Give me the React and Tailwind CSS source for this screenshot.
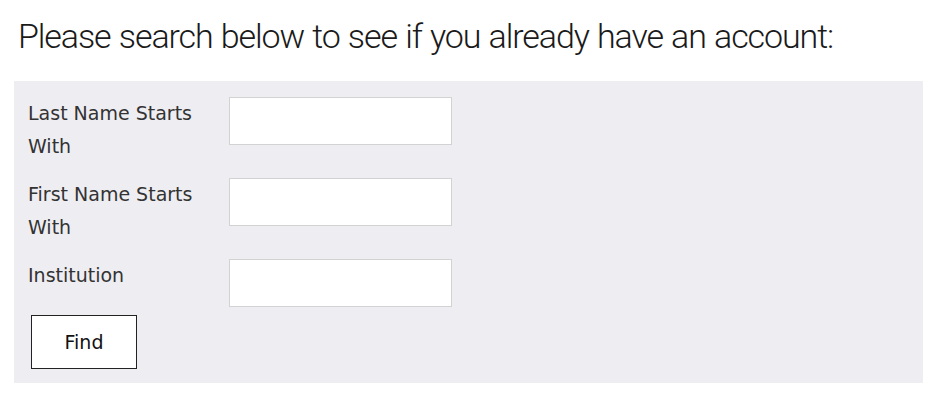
export default function App() {
  const fields = [
    { label: "Last Name Starts With", gap: "mb-[15px]" },
    { label: "First Name Starts With", gap: "mb-[15px]" },
    { label: "Institution", gap: "mb-[8px]" },
  ];

  return (
    <div className="min-h-[406px] w-[945px] bg-white">
      {/* Heading */}
      <h1 className="pl-[18px] pt-[14px] text-[34px] leading-[44px] font-light tracking-[-1.1px] [word-spacing:1px] text-[#1a1a1a] [font-family:'Roboto',sans-serif]">
        Please search below to see if you already have an account:
      </h1>

      {/* Search panel */}
      <div className="mx-[14px] mt-[23px] w-[909px] bg-[#eeedf2] px-[14px] pt-[16px] pb-[14px] [font-family:'DejaVu_Sans',sans-serif]">
        {fields.map((f) => (
          <div key={f.label} className={`flex items-start ${f.gap}`}>
            <label className="w-[201px] pr-[12px] text-[19px] leading-[33px] text-[#333]">
              {f.label}
            </label>
            <input
              type="text"
              className="h-[48px] w-[223px] border border-[#d2d2d2] bg-white outline-none"
            />
          </div>
        ))}
        <button
          type="button"
          className="ml-[3px] h-[54px] w-[106px] border border-[#222] bg-white text-[19px] text-[#111]"
        >
          Find
        </button>
      </div>
    </div>
  );
}
